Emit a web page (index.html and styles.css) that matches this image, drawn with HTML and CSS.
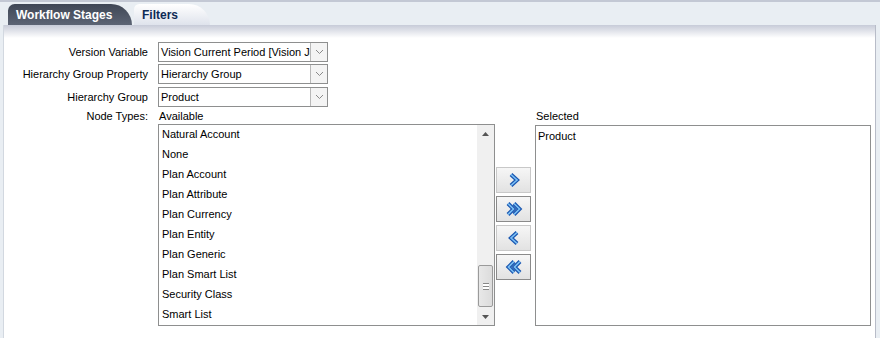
FILE: index.html
```html
<!DOCTYPE html>
<html>
<head>
<meta charset="utf-8">
<link rel="stylesheet" href="styles.css">
</head>
<body>
<div class="page">
  <div class="tabs">
    <div class="tab tab-off">Workflow Stages</div>
    <div class="tab tab-on">Filters</div>
  </div>
  <div class="panel">
    <div class="form">
      <div class="row">
        <div class="label">Version Variable</div>
        <div class="select"><span class="val">Vision Current Period [Vision Ja</span><span class="btn"><svg width="9" height="6" viewBox="0 0 9 6"><path d="M1 1 L4.5 4.5 L8 1" fill="none" stroke="#8a8a8a" stroke-width="1"/></svg></span></div>
      </div>
      <div class="row">
        <div class="label">Hierarchy Group Property</div>
        <div class="select"><span class="val">Hierarchy Group</span><span class="btn"><svg width="9" height="6" viewBox="0 0 9 6"><path d="M1 1 L4.5 4.5 L8 1" fill="none" stroke="#8a8a8a" stroke-width="1"/></svg></span></div>
      </div>
      <div class="row third">
        <div class="label">Hierarchy Group</div>
        <div class="select"><span class="val">Product</span><span class="btn"><svg width="9" height="6" viewBox="0 0 9 6"><path d="M1 1 L4.5 4.5 L8 1" fill="none" stroke="#8a8a8a" stroke-width="1"/></svg></span></div>
      </div>
      <div class="row shuttle-row">
        <div class="label nt">Node Types:</div>
        <div class="shuttle">
          <div class="col">
            <div class="cap">Available</div>
            <div class="list avail">
              <div class="items">
                <div class="item">Natural Account</div>
                <div class="item">None</div>
                <div class="item">Plan Account</div>
                <div class="item">Plan Attribute</div>
                <div class="item">Plan Currency</div>
                <div class="item">Plan Entity</div>
                <div class="item">Plan Generic</div>
                <div class="item">Plan Smart List</div>
                <div class="item">Security Class</div>
                <div class="item">Smart List</div>
              </div>
              <div class="sbar">
                <div class="arr"><svg width="7" height="4" viewBox="0 0 7 4"><path d="M0 4 L3.5 0 L7 4 Z" fill="#555"/></svg></div>
                <div class="track">
                  <div class="thumb"><span class="grip"></span></div>
                </div>
                <div class="arr"><svg width="7" height="4" viewBox="0 0 7 4"><path d="M0 0 L3.5 4 L7 0 Z" fill="#555"/></svg></div>
              </div>
            </div>
          </div>
          <div class="moves">
            <div class="mv"><svg width="14" height="14" viewBox="0 0 14 14"><path d="M4 1.5 L10 7 L4 12.5" fill="none" stroke="#1a56b0" stroke-width="4"/><path d="M4 1.5 L10 7 L4 12.5" fill="none" stroke="#7cc0f5" stroke-width="1.6"/></svg></div>
            <div class="mv dark"><svg width="18" height="14" viewBox="0 0 18 14"><path d="M3 1.5 L8.5 7 L3 12.5 M9 1.5 L14.5 7 L9 12.5" fill="none" stroke="#1a56b0" stroke-width="4"/><path d="M3 1.5 L8.5 7 L3 12.5 M9 1.5 L14.5 7 L9 12.5" fill="none" stroke="#7cc0f5" stroke-width="1.6"/></svg></div>
            <div class="mv"><svg width="14" height="14" viewBox="0 0 14 14"><path d="M10 1.5 L4 7 L10 12.5" fill="none" stroke="#1a56b0" stroke-width="4"/><path d="M10 1.5 L4 7 L10 12.5" fill="none" stroke="#7cc0f5" stroke-width="1.6"/></svg></div>
            <div class="mv dark"><svg width="18" height="14" viewBox="0 0 18 14"><path d="M15 1.5 L9.5 7 L15 12.5 M9 1.5 L3.5 7 L9 12.5" fill="none" stroke="#1a56b0" stroke-width="4"/><path d="M15 1.5 L9.5 7 L15 12.5 M9 1.5 L3.5 7 L9 12.5" fill="none" stroke="#7cc0f5" stroke-width="1.6"/></svg></div>
          </div>
          <div class="col col-sel">
            <div class="cap">Selected</div>
            <div class="list sel">
              <div class="item">Product</div>
            </div>
          </div>
        </div>
      </div>
    </div>
  </div>
</div>
</body>
</html>
```
FILE: styles.css
```css
html, body {
  margin: 0;
  padding: 0;
}
body {
  width: 880px;
  height: 338px;
  overflow: hidden;
  background: #e9eef3;
  font-family: Tahoma, "Liberation Sans", Arial, sans-serif;
  font-size: 11px;
  color: #000;
}
.page {
  height: 338px;
  border-top: 2px solid #c3c8d4;
  box-sizing: border-box;
  padding: 2px 4px 0 3px;
}
.tabs {
  display: flex;
  height: 21px;
  padding-left: 5px;
  align-items: flex-end;
}
.tab {
  height: 21px;
  box-sizing: border-box;
  font-weight: bold;
  font-size: 12px;
  line-height: 22px;
}
.tab-off {
  width: 124px;
  padding-left: 8px;
  color: #fff;
  background: linear-gradient(#3f4655, #5c6474);
  border-radius: 7px 22px 0 0;
}
.tab-on {
  width: 76px;
  margin-left: 2px;
  padding-left: 8px;
  color: #0d2a55;
  background: linear-gradient(#ffffff, #dfe3ec);
  border-radius: 7px 28px 0 0;
}
.panel {
  height: 313px;
  background: #fff;
  border-left: 1px solid #d2d8e0;
  border-right: 1px solid #b8bcc8;
  background-image: linear-gradient(#c7cbd8, #ffffff 13px);
  padding-top: 17px;
  box-sizing: border-box;
}
.form {
  display: flex;
  flex-direction: column;
}
.row {
  display: flex;
  align-items: center;
  margin-bottom: 2px;
}
.row.third {
  margin-top: 1px;
}
.label {
  width: 144px;
  text-align: right;
  padding-right: 10px;
}
.select {
  width: 170px;
  height: 20px;
  box-sizing: border-box;
  border: 1px solid #8e8f8f;
  background: #fff;
  display: flex;
}
.val {
  flex: 1;
  overflow: hidden;
  white-space: nowrap;
  line-height: 18px;
  padding-left: 2px;
}
.btn {
  width: 16px;
  border-left: 1px solid #b8b8b8;
  display: flex;
  align-items: center;
  justify-content: center;
  background: #f4f4f4;
}
.shuttle-row {
  align-items: flex-start;
}
.label.nt {
  line-height: 14px;
}
.shuttle {
  display: flex;
}
.col {
  display: flex;
  flex-direction: column;
}
.col-sel {
  margin-left: 4px;
}
.cap {
  line-height: 14px;
  height: 14px;
  padding-left: 1px;
  margin-bottom: 1px;
}
.list {
  border: 1px solid #8e8f8f;
  background: #fff;
  height: 202px;
  box-sizing: border-box;
}
.avail {
  width: 337px;
  display: flex;
}
.items {
  flex: 1;
}
.item {
  height: 20px;
  line-height: 18px;
  padding-left: 3px;
}
.sel {
  width: 336px;
  margin-top: 1px;
  height: 201px;
  padding-top: 1px;
}
.sel .item {
  padding-left: 2px;
}
.sbar {
  width: 17px;
  background: #f0f0f0;
  display: flex;
  flex-direction: column;
}
.arr {
  height: 17px;
  display: flex;
  align-items: center;
  justify-content: center;
}
.track {
  flex: 1;
  display: flex;
  flex-direction: column;
  justify-content: flex-end;
  padding-bottom: 1px;
}
.thumb {
  height: 40px;
  margin: 0 1px;
  border: 1px solid #9a9a9a;
  border-radius: 2px;
  background: linear-gradient(90deg, #e8e8e8, #dcdcdc);
  display: flex;
  align-items: center;
  justify-content: center;
}
.grip {
  width: 6px;
  height: 5px;
  border-top: 1px solid #888;
  border-bottom: 1px solid #888;
  background: linear-gradient(#fff 0 2px, #888 2px 3px, #fff 3px);
}
.moves {
  width: 35px;
  margin-left: 1px;
  padding-top: 58px;
  display: flex;
  flex-direction: column;
  gap: 3px;
}
.mv {
  height: 26px;
  box-sizing: border-box;
  border: 1px solid #c8c8c8;
  background: linear-gradient(#f6f6f6, #e2e2e2);
  display: flex;
  align-items: center;
  justify-content: center;
}
.mv.dark {
  border-color: #8a8a8a;
}
```
